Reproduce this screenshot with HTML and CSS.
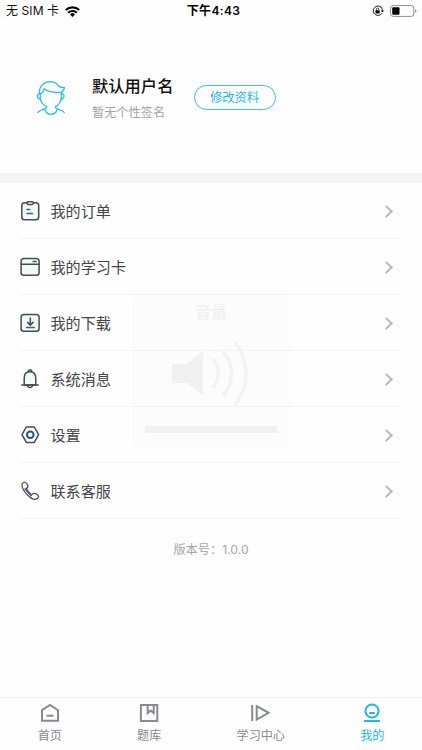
FILE: index.html
```html
<!DOCTYPE html>
<html lang="zh-CN">
<head>
<meta charset="utf-8">
<title>我的</title>
<link rel="stylesheet" href="styles.css">
</head>
<body>
<div class="app">
  <header class="status">
    <div class="carrier"><span>无 SIM 卡</span>
      <svg width="15" height="11" viewBox="0 0 15 11"><g fill="none" stroke="#000" stroke-width="2.1"><path d="M.8 4.1a9.5 9.5 0 0 1 13.4 0"/><path d="M3.2 6.7a6.1 6.1 0 0 1 8.6 0"/></g><path d="M5 8.4a3.5 3.5 0 0 1 5 0L7.5 11z"/></svg>
    </div>
    <time>下午4:43</time>
    <div class="power">
      <svg width="12" height="12" viewBox="0 0 12 12"><path d="M9.5 2.6A4.7 4.7 0 1 0 10 8.2M8.5 1.8a4.7 4.7 0 0 1 1.9 4" fill="none" stroke="#222" stroke-width="1"/><path d="M8.8 5.4h3.2l-1.6 2z"/><rect x="3.5" y="5.2" width="4.2" height="3.3" rx=".4"/><path d="M4.4 5.4V4.2a1.2 1.2 0 0 1 2.4 0v1.2" fill="none" stroke="#111" stroke-width=".8"/></svg>
      <svg width="27" height="12" viewBox="0 0 27 12"><rect x=".6" y=".6" width="23.2" height="10.8" rx="2.6" fill="none" stroke="#8d8d8d"/><rect x="2.2" y="2.2" width="7.3" height="7.6" rx="1"/><path d="M25 4.2q1.5.5 1.5 1.8T25 7.8z" fill="#999"/></svg>
    </div>
  </header>

  <section class="profile">
    <svg class="avatar" width="30" height="36" viewBox="0 0 30 36" fill="none" stroke="#2bbcec" stroke-width="1.3" stroke-linecap="round" stroke-linejoin="round"><path d="M3.500 13.500C2.800 7 7 1.800 14 1.600c4.300 0 7.200 1.700 8.500 4.500 1.800 1.300 3.800 1.700 6 1.600-.5 2.400-1.500 3.900-3.300 4.500-6 .8-12.700-.2-17.200-3.400-.3 2.200-1.600 4.100-3.700 5"/><path d="M4.200 14v3.500c.3 4 2.800 7.500 6.300 9M25.300 12.200v5.300c-.3 4-2.300 7.500-5.800 9"/><path d="M3.800 13.700c-3.300-.3-3.200 5.200.7 5.400M25.600 13.700c3.300-.3 3.200 5.200-.7 5.400M10.500 26.500v1c-.5 2.200-6.500 1.300-8.700 5M19.500 26.500v1c.5 2.200 6.500 1.300 8.700 5M9.200 30c1.500 5.600 10.100 5.600 11.600 0"/></svg>
    <div class="identity">
      <h1>默认用户名</h1>
      <p>暂无个性签名</p>
    </div>
    <button class="edit" type="button">修改资料</button>
  </section>

  <nav class="menu">
    <a class="row"><svg class="icon" viewBox="0 0 20 20"><rect x="1.800" y="1.700" width="16.900" height="17" rx="2.800" class="tint"/><rect x="7" y=".7" width="6.400" height="2.700" rx="1.300" class="white"/><path d="M7 8.500h2.600M7 12.500h5.500" class="accent"/></svg><span>我的订单</span><i class="chevron"></i></a>
    <a class="row"><svg class="icon" viewBox="0 0 20 20"><rect x="1.100" y="1.400" width="18" height="16.900" rx="2.800" class="tint"/><path d="M1.100 7.200h18" class="line"/><path d="M13 4.500h3.200" class="accent"/></svg><span>我的学习卡</span><i class="chevron"></i></a>
    <a class="row"><svg class="icon" viewBox="0 0 20 20"><rect x="1.100" y="1.400" width="18" height="16.900" rx="2.800" class="tint"/><path d="M10.300 5v7M7.600 9.400l2.700 2.700 2.700-2.700" class="line"/><path d="M6.500 14.500h7.700" class="accent"/></svg><span>我的下载</span><i class="chevron"></i></a>
    <a class="row"><svg class="icon" viewBox="0 0 20 20"><path d="M4.200 16V9.300c0-4.200 2.200-6.600 5.800-6.600s5.800 2.400 5.800 6.600V16z" class="tint"/><path d="M1.800 16h16.400M8.300 2.800c-.3-2.600 3.700-2.600 3.400 0M7.500 16.300c.5 2.900 4.500 2.900 5 0" class="line"/></svg><span>系统消息</span><i class="chevron"></i></a>
    <a class="row"><svg class="icon" viewBox="0 0 20 20"><path d="M6.300 2h8l4.300 7.700-4.300 7.700h-8L2 9.700z" class="line"/><circle cx="10.300" cy="9.700" r="3.300" class="ring"/></svg><span>设置</span><i class="chevron"></i></a>
    <a class="row"><svg class="icon" viewBox="0 0 20 20"><path d="M2.300 2.500C4 .2 5.800 1.200 7.300 3.400c1.200 2 .7 3-.8 3.900-.7.600 4.900 6.700 5.700 6.100 1.200-1 2.100-1.700 3.900-.6 2.500 1.500 3.300 2.800 1.500 4.400C12.500 22 .3 8 2.300 2.500z" class="phone"/><path d="M5.200 8l6 6.600" class="coil"/></svg><span>联系客服</span><i class="chevron"></i></a>
  </nav>
  <p class="version">版本号：1.0.0</p>

  <footer class="tabs">
    <a class="tab"><svg viewBox="0 0 20 20"><path d="M2 7.200l8-5.200 8 5.200v10.600H2z"/><path d="M6.500 12.700h7"/></svg><span>首页</span></a>
    <a class="tab"><svg viewBox="0 0 20 20"><path d="M1.900 1.900h16.400v16H1.900z"/><path d="M8.700 2v8l3-2.500 3 2.500V2"/></svg><span>题库</span></a>
    <a class="tab"><svg viewBox="0 0 20 20"><path d="M1.200 2v16M5.700 3.200l11.800 6.600-11.800 6.700z"/></svg><span>学习中心</span></a>
    <a class="tab active"><svg viewBox="0 0 20 20"><circle cx="10" cy="8" r="6.600"/><path d="M7.200 10h5.600M2 18h16"/></svg><span>我的</span></a>
  </footer>

  <div class="volume">
    <strong>音量</strong>
    <svg width="78" height="66" viewBox="0 0 78 66"><path d="M0 23h15L31 10v45L15 42H0z" fill="#f1f1f1"/><path d="M41 18q10 14 0 29M51 10q17 22 0 45M63 1q22 32 0 64" fill="none" stroke="#f3f3f3" stroke-width="3.500"/></svg>
    <div class="level"></div>
  </div>
</div>
</body>
</html>
```
FILE: styles.css
```css
* { box-sizing: border-box; }
body, h1, p { margin: 0; }
body { background: #fefefe; font-family: "Inter", "Noto Sans CJK SC", sans-serif; }
.app { position: relative; width: 422px; height: 750px; display: flex; flex-direction: column; overflow: hidden; }
svg { display: block; flex: none; }

.status { height: 22px; flex: none; display: grid; grid-template-columns: 1fr auto 1fr; align-items: center; padding: 0 5px 0 6px; font-size: 12px; line-height: 22px; color: #111; }
.carrier { display: flex; align-items: center; gap: 6px; letter-spacing: .1px; }
.status time { font-weight: 600; letter-spacing: .35px; color: #000; padding-left: 4px; }
.power { display: flex; align-items: center; justify-content: flex-end; gap: 6px; }

.profile { height: 151px; flex: none; display: flex; align-items: center; padding: 0 0 0 36px; }
.identity { margin-left: 26px; width: 82px; white-space: nowrap; }
.identity h1 { font-size: 16.300px; line-height: 24px; font-weight: 500; color: #111; }
.identity p { font-size: 12.200px; line-height: 18px; color: #a3a3a3; margin-top: 6px; }
.edit { margin-left: 19.500px; width: 82px; height: 25px; padding: 1px 0 0; border: 1.500px solid #3dbfe9; border-radius: 13px; background: none; color: #2bb6e6; font: inherit; font-size: 12.300px; line-height: 20px; }

.menu { border-top: 10px solid #f4f5f6; padding: 0 22px 0 20px; flex: none; }
.row { height: 56px; display: flex; align-items: center; border-bottom: 1px solid #f5f5f5; color: #45454c; font-size: 15.100px; line-height: 22px; }
.row span { margin-left: 10.500px; padding-top: 2px; flex: 1; }
.icon { width: 20px; height: 20px; fill: none; stroke: #474b52; stroke-width: 1.500; stroke-linecap: round; stroke-linejoin: round; }
.tint { fill: #f1faf3; }
.white { fill: #fff; }
.accent { stroke: #286493; stroke-width: 1.500; }
.ring { stroke: #26528c; stroke-width: 2; }
.phone { stroke-width: 1.200; }
.coil { stroke: #555b88; stroke-width: 1.700; }
.chevron { width: 9px; height: 9px; margin: 1px 9px 0 0; border: solid #b8b8b8; border-width: 2px 2px 0 0; transform: rotate(45deg); }

.version { margin-top: 21px; text-align: center; font-size: 12.200px; line-height: 20px; color: #a3a6aa; }

.tabs { margin-top: auto; height: 53px; border-top: 1px solid #f0f0f0; display: flex; justify-content: space-around; }
.tab { display: flex; flex-direction: column; align-items: center; padding-top: 5px; font-size: 12.100px; line-height: 18px; color: #858a94; }
.tab svg { width: 20px; height: 20px; margin-bottom: 4px; fill: none; stroke: currentColor; stroke-width: 2; }
.tab.active { color: #22b5e6; }

.volume { position: absolute; left: 132px; top: 293px; width: 158px; height: 156px; border-radius: 8px; background: rgba(0, 0, 0, .008); display: flex; flex-direction: column; align-items: center; }
.volume strong { margin-top: 7px; font-size: 16px; line-height: 24px; font-weight: 600; color: #f2f2f2; }
.volume svg { margin: 17px 0 0; }
.level { width: 132px; height: 7px; margin-top: 19px; background: #f1f1f1; }
```
